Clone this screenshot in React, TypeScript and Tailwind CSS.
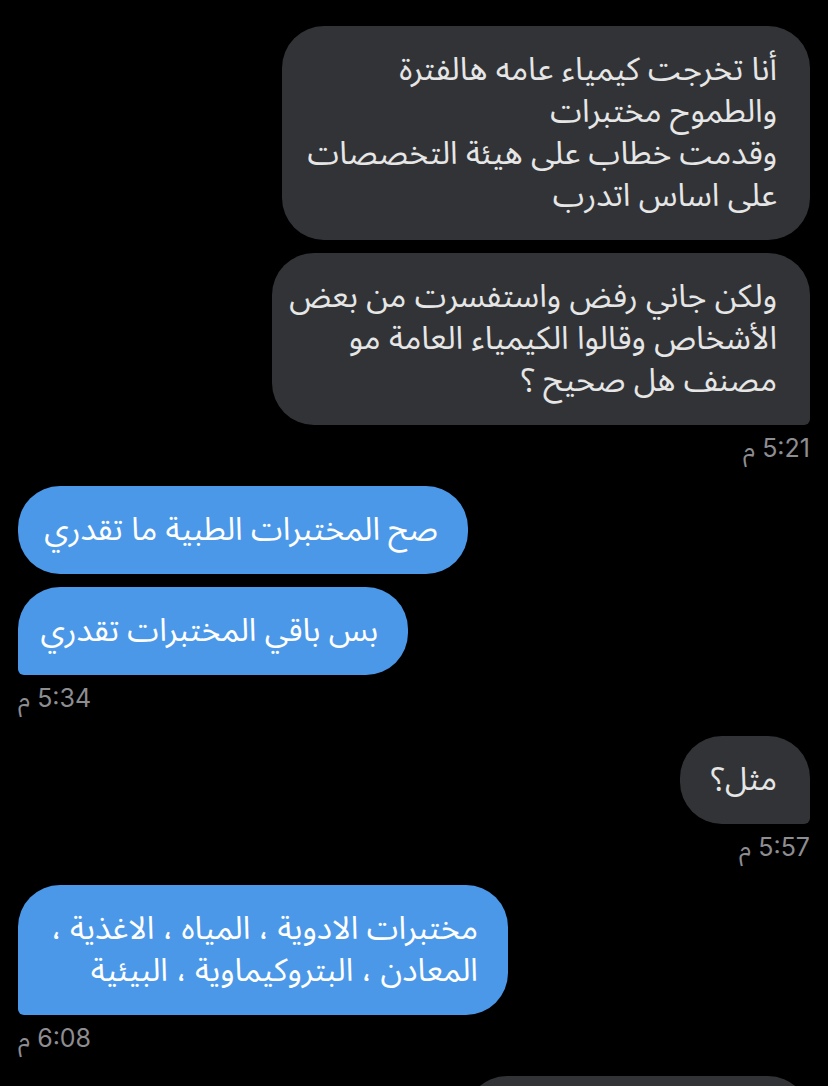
const arabic = "font-['Noto_Sans_Arabic','DejaVu_Sans',sans-serif]";

function Out({ lines, w, last }: { lines: string[]; w: string; last?: boolean }) {
  return (
    <div
      dir="rtl"
      className={`${w} ${arabic} bg-[#313336] text-[#e6e6e6] text-[32px] leading-[42px] py-[23px] pr-[33px] pl-[20px] rounded-[42px] ${
        last ? "rounded-br-[6px]" : ""
      }`}
    >
      {lines.map((l, i) => (
        <div key={i} className="whitespace-nowrap">
          {l}
        </div>
      ))}
    </div>
  );
}

function In({ lines, w, last }: { lines: string[]; w: string; last?: boolean }) {
  return (
    <div
      dir="rtl"
      className={`${w} ${arabic} bg-[#4b98e9] text-white text-[32px] leading-[42px] py-[23px] pr-[30px] pl-[20px] rounded-[42px] ${
        last ? "rounded-bl-[6px]" : ""
      }`}
    >
      {lines.map((l, i) => (
        <div key={i} className="whitespace-nowrap">
          {l}
        </div>
      ))}
    </div>
  );
}

function Time({ t }: { t: string }) {
  return (
    <div
      dir="rtl"
      className="mt-[10px] h-[26px] leading-[26px] text-[25px] text-[#8d8d92] font-['Inter','Noto_Sans_Arabic','DejaVu_Sans',sans-serif]"
    >
      {t}
    </div>
  );
}

export default function App() {
  return (
    <div className="w-[828px] h-[1086px] bg-black overflow-hidden px-[18px] flex flex-col">
      <div className="flex flex-col items-end pt-[26px]">
        <Out
          w="w-[528px]"
          lines={[
            "أنا تخرجت كيمياء عامه هالفترة",
            "والطموح مختبرات",
            "وقدمت خطاب على هيئة التخصصات",
            "على اساس اتدرب",
          ]}
        />
        <div className="mt-[13px]">
          <Out
            w="w-[538px]"
            last
            lines={["ولكن جاني رفض واستفسرت من بعض", "الأشخاص وقالوا الكيمياء العامة مو", "مصنف هل صحيح ؟"]}
          />
        </div>
        <Time t="5:21 م" />
      </div>

      <div className="flex flex-col items-start mt-[25px]">
        <In w="w-[450px]" lines={["صح المختبرات الطبية ما تقدري"]} />
        <div className="mt-[13px]">
          <In w="w-[390px]" last lines={["بس باقي المختبرات تقدري"]} />
        </div>
        <Time t="5:34 م" />
      </div>

      <div className="flex flex-col items-end mt-[25px]">
        <Out w="w-[130px]" last lines={["مثل؟"]} />
        <Time t="5:57 م" />
      </div>

      <div className="flex flex-col items-start mt-[25px]">
        <In
          w="w-[490px]"
          last
          lines={["مختبرات الادوية ، المياه ، الاغذية ،", "المعادن ، البتروكيماوية ، البيئية"]}
        />
        <Time t="6:08 م" />
      </div>

      <div className="flex flex-col items-end mt-[25px]">
        <div className="w-[345px] h-[120px] bg-[#313336] rounded-[42px]" />
      </div>
    </div>
  );
}
